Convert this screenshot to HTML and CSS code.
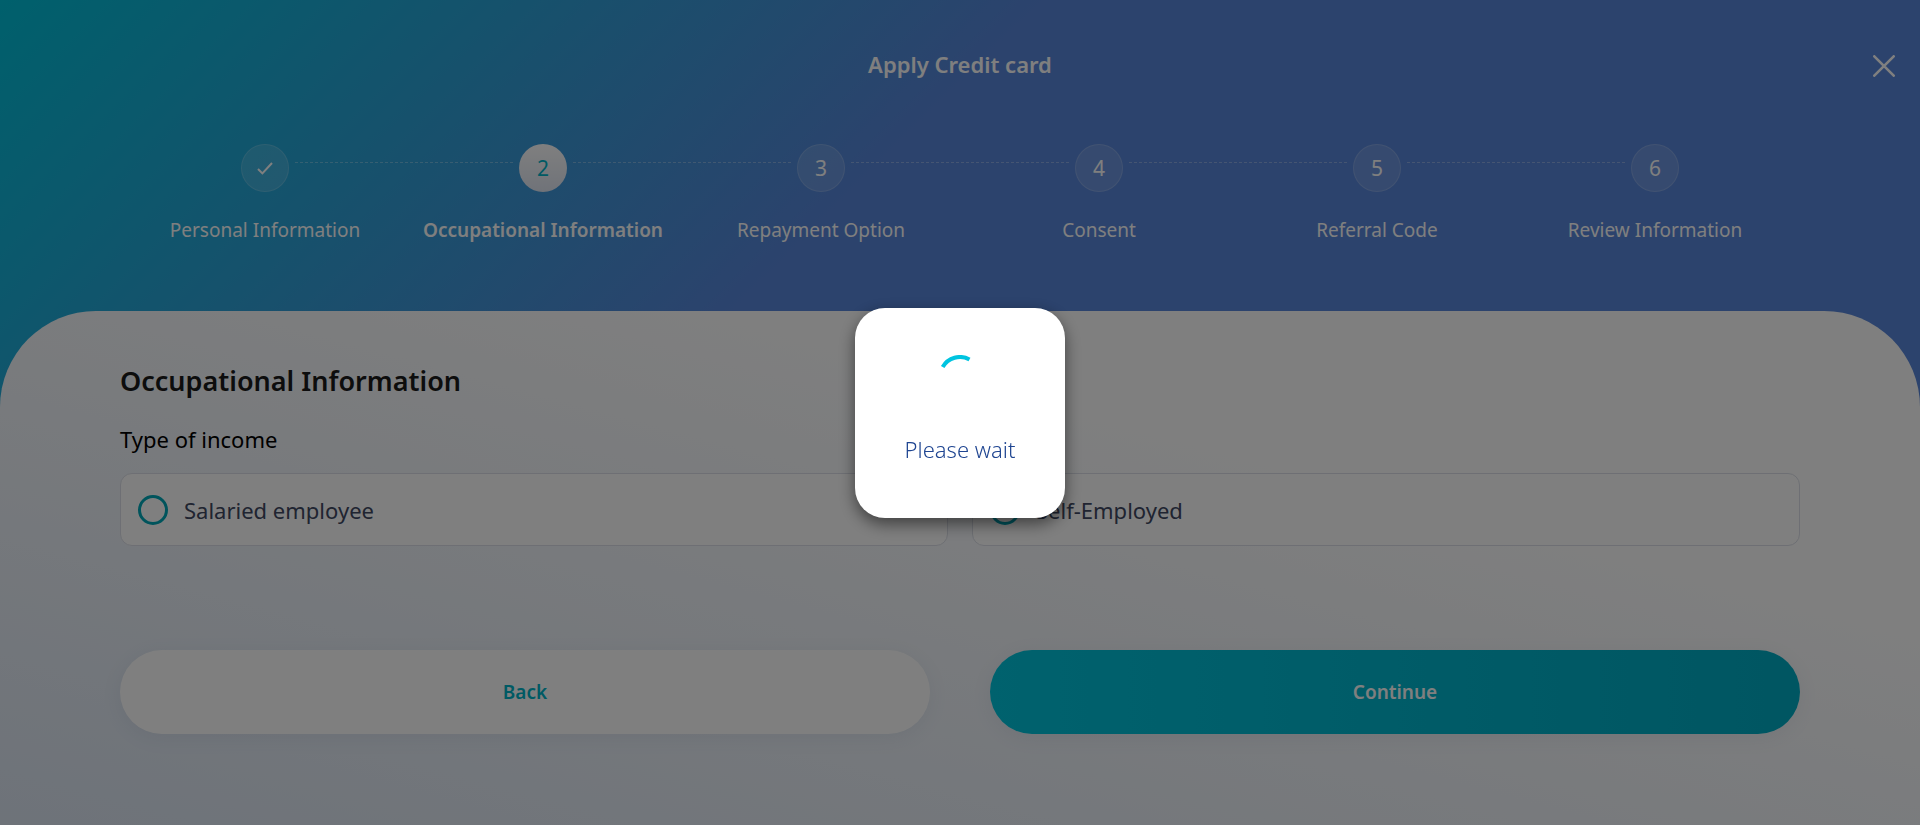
FILE: index.html
```html
<!DOCTYPE html>
<html lang="en">
<head>
<meta charset="utf-8">
<meta name="viewport" content="width=device-width, initial-scale=1">
<title>Apply Credit card</title>
<link rel="stylesheet" href="styles.css">
</head>
<body>
<div class="page">
  <header class="header">
    <h1 class="title">Apply Credit card</h1>
    <button class="close" type="button" aria-label="Close">
      <svg width="22" height="22" viewBox="0 0 22 22" fill="none" stroke="#fff" stroke-width="2.6" stroke-linecap="round"><path d="M1.3 1.3l19.4 19.4M20.7 1.3L1.3 20.7"/></svg>
    </button>
  </header>
  <ol class="steps">
    <li class="step done"><span class="dot"><svg width="16" height="13" viewBox="0 0 16 13" fill="none" stroke="#fff" stroke-width="2"><path d="M1 7l4.4 4.4L15 1"/></svg></span><span class="label">Personal Information</span></li>
    <li class="step current"><span class="dot">2</span><span class="label">Occupational Information</span></li>
    <li class="step"><span class="dot">3</span><span class="label">Repayment Option</span></li>
    <li class="step"><span class="dot">4</span><span class="label">Consent</span></li>
    <li class="step"><span class="dot">5</span><span class="label">Referral Code</span></li>
    <li class="step"><span class="dot">6</span><span class="label">Review Information</span></li>
  </ol>
  <main class="panel">
    <h2 class="heading">Occupational Information</h2>
    <form>
      <fieldset class="income">
        <legend class="legend">Type of income</legend>
        <div class="options">
          <label class="option"><input class="radio" type="radio" name="income"><span>Salaried employee</span></label>
          <label class="option"><input class="radio" type="radio" name="income"><span>Self-Employed</span></label>
        </div>
      </fieldset>
      <div class="actions">
        <button class="btn back" type="button">Back</button>
        <button class="btn next" type="submit">Continue</button>
      </div>
    </form>
  </main>
</div>
<div class="overlay">
  <div class="loader" role="status">
    <svg class="spinner" width="44" height="44" viewBox="0 0 44 44" fill="none" stroke="#00c4e0" stroke-width="4"><path d="M4.68 12A20 20 0 0 1 31.5 4.4"/></svg>
    <span class="wait">Please wait</span>
  </div>
</div>
</body>
</html>
```

FILE: styles.css
```css
* {
  box-sizing: border-box;
}

body {
  margin: 0;
  font-family: "Noto Sans", "Open Sans", sans-serif;
  font-size: 19px;
  line-height: 28px;
  color: #000;
}

.page {
  display: flex;
  flex-direction: column;
  min-height: 100vh;
  background: linear-gradient(135deg, #00c0d8 0%, #5886da 38%);
}

.header {
  display: grid;
  grid-template-columns: 1fr auto 1fr;
  align-items: center;
  padding: 50px 25px 0;
  color: #fff;
}

.title {
  grid-column: 2;
  margin: 0;
  font-size: 22px;
  line-height: 28px;
  font-weight: 600;
}

.close {
  justify-self: end;
  display: flex;
  padding: 4px 0 0;
  border: 0;
  background: none;
}

.steps {
  display: flex;
  margin: 66px 126px 0;
  padding: 0;
  list-style: none;
  color: #fff;
}

.step {
  position: relative;
  flex: 1;
  display: flex;
  flex-direction: column;
  align-items: center;
  gap: 24px;
}

.step:not(:last-child)::after {
  content: "";
  position: absolute;
  top: 18px;
  left: calc(50% + 30px);
  right: calc(-50% + 30px);
  border-top: 1px dashed rgba(255, 255, 255, 0.3);
}

.dot {
  display: flex;
  align-items: center;
  justify-content: center;
  width: 48px;
  height: 48px;
  border: 1px solid rgba(255, 255, 255, 0.15);
  border-radius: 50%;
  background: rgba(255, 255, 255, 0.13);
  font-size: 21px;
}

.current .dot {
  border: 0;
  background: linear-gradient(#fff, #e0e6f2);
  color: #00b4c8;
}

.current .label {
  font-weight: 600;
}

.panel {
  flex: 1;
  margin-top: 67px;
  padding: 52px 120px 88px;
  border-radius: 96px 96px 0 0;
  background: linear-gradient(15deg, #dce6f3 0%, #fff 70%);
}

.heading {
  margin: 0;
  font-size: 27px;
  line-height: 36px;
  font-weight: 600;
  color: #1a1a1a;
}

.income {
  margin: 0;
  padding: 0;
  border: 0;
}

.legend {
  padding: 26px 0 20px;
  font-size: 22px;
}

.options {
  display: grid;
  grid-template-columns: 1fr 1fr;
  gap: 24px;
}

.option {
  display: flex;
  align-items: center;
  gap: 16px;
  height: 73px;
  padding: 0 17px;
  border: 1px solid #dcdfe8;
  border-radius: 12px;
  background: #fff;
  font-size: 22px;
  color: #404862;
}

.radio {
  appearance: none;
  width: 30px;
  height: 30px;
  margin: 0;
  border: 3px solid #00a8b8;
  border-radius: 50%;
}

.actions {
  display: grid;
  grid-template-columns: 1fr 1fr;
  gap: 60px;
  margin-top: 104px;
}

.btn {
  height: 84px;
  border: 0;
  border-radius: 42px;
  box-shadow: 0 4px 20px rgba(60, 90, 130, 0.08);
  font: 600 19px/28px "Noto Sans", "Open Sans", sans-serif;
}

.back {
  background: #fff;
  color: #00b4c8;
}

.next {
  background: linear-gradient(90deg, #00c4dc, #00acc4);
  color: #fff;
}

.overlay {
  position: fixed;
  inset: 0;
  display: flex;
  align-items: center;
  justify-content: center;
  background: rgba(0, 0, 0, 0.5);
}

.loader {
  display: flex;
  flex-direction: column;
  align-items: center;
  gap: 36px;
  min-height: 210px;
  min-width: 210px;
  padding: 47px 24px 0;
  border-radius: 30px;
  background: #fff;
  box-shadow: 0 6px 16px rgba(0, 0, 0, 0.5);
}

.wait {
  font-size: 22px;
  font-weight: 300;
  color: #1f4591;
}
```
